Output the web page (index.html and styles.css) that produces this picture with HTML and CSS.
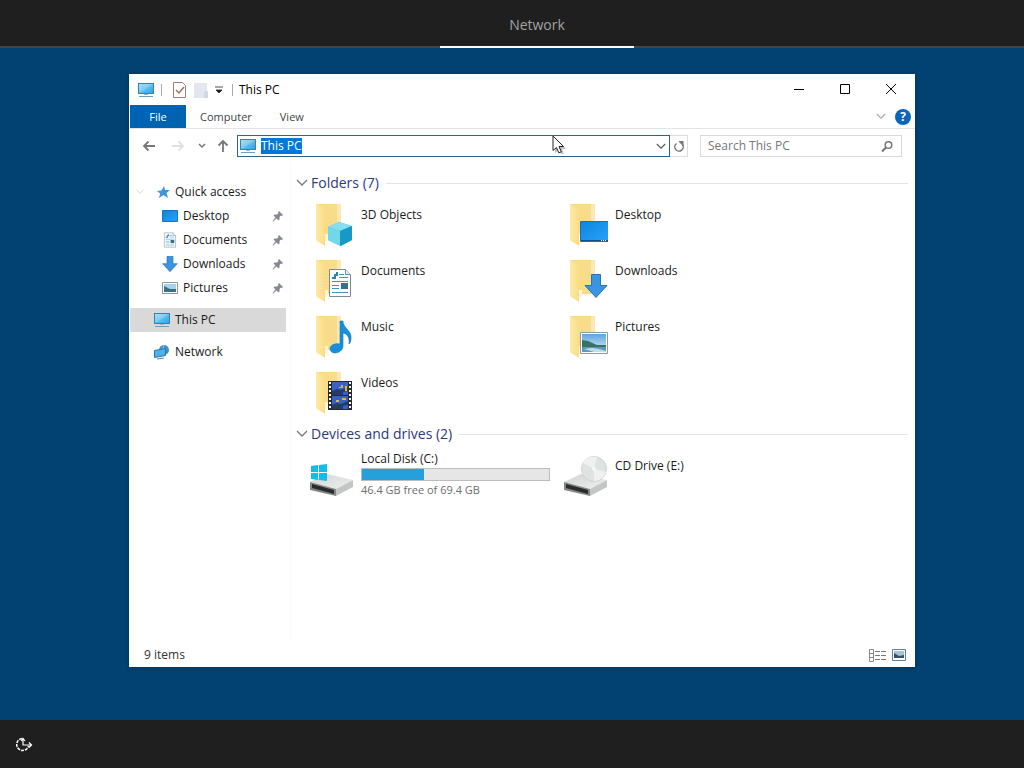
FILE: index.html
```html
<!DOCTYPE html>
<html lang="en">
<head>
    <meta charset="UTF-8">
    <meta name="viewport" content="width=device-width, initial-scale=1.0">
    <title>This PC</title>
    <link rel="stylesheet" href="styles.css">
</head>
<body>
    <!-- shared icons -->
    <svg class="defs" aria-hidden="true">
        <defs>
            <linearGradient id="screen" x1="0" y1="0" x2="1" y2="1">
                <stop offset="0" stop-color="#8fdcfa"/>
                <stop offset="1" stop-color="#2aa0e4"/>
            </linearGradient>
            <linearGradient id="blue" x1="0" y1="0" x2="1" y2="1">
                <stop offset="0" stop-color="#1184dd"/>
                <stop offset="1" stop-color="#25a4f8"/>
            </linearGradient>
            <linearGradient id="yellow" x1="0" y1="0" x2="1" y2="0">
                <stop offset="0" stop-color="#fdeaa9"/>
                <stop offset="1" stop-color="#fbdd84"/>
            </linearGradient>
            <linearGradient id="sky" x1="0" y1="0" x2="0" y2="1">
                <stop offset="0" stop-color="#5ba6e0"/>
                <stop offset="1" stop-color="#e2f1f7"/>
            </linearGradient>
            <linearGradient id="metal" x1="0" y1="0" x2="1" y2="1">
                <stop offset="0" stop-color="#d2d4d4"/>
                <stop offset="1" stop-color="#eef0f0"/>
            </linearGradient>
        </defs>
        <symbol id="pc" viewBox="0 0 18 16">
            <rect x="1.5" y="1.5" width="15" height="10" fill="url(#screen)" stroke="#3b80ac"/>
            <path d="M2 2h14L4 10H2z" fill="#fff" opacity=".2"/>
            <path d="M7 12h4v1H7z" fill="#9db5c2"/>
            <path d="M2 14.5h14" stroke="#6ba0bf"/>
        </symbol>
        <symbol id="folder" viewBox="0 0 44 48">
            <path d="M6 5h24v34H15z" fill="#f8dc8a"/>
            <path d="M27 5h4v34h-4z" fill="#fbe9b4"/>
            <path d="M6 5l8 4q1 1 1 3v35l-8-5q-1-1-1-2z" fill="url(#yellow)"/>
            <path d="M15 35h3v6l-3 2z" fill="#fff6d8"/>
        </symbol>
        <symbol id="page" viewBox="0 0 24 30">
            <path d="M1.500 1.500h16l5 5v22h-21z" fill="#fff" stroke="#7c8a93"/>
            <path d="M17.500 1.500v5h5" fill="#e9eef1" stroke="#7c8a93"/>
            <path d="M4 10h3V7h2V4" fill="none" stroke="#2585bd" stroke-width="2"/>
            <path d="M11 6.500h5M11 9.500h9M4 13.500h16M4 17.500h7M4 20.500h7M4 24.500h16" stroke="#3f95c6"/>
            <rect x="13" y="15" width="7" height="6" fill="#397084"/>
        </symbol>
        <symbol id="down" viewBox="0 0 24 24">
            <path d="M7.500 .5h9v11h6.500L12 23.500 1 11.500h6.500z" fill="#3995e2" stroke="#2475bb"/>
        </symbol>
        <symbol id="photo" viewBox="0 0 28 22">
            <path d="M.5 .5h27v21H.5z" fill="#fff" stroke="#91999e"/>
            <path d="M2 2h24v18H2z" fill="url(#sky)"/>
            <path d="M2 8l6 1 9 4h9v3H2z" fill="#397265"/>
            <path d="M2 15h24v5H2z" fill="#5c9abd"/>
            <path d="M4 17l8-1 7 1 7 2v1H14z" fill="#c5dce6"/>
        </symbol>
        <symbol id="pin" viewBox="0 0 12 12">
            <path d="M7 1l4 4-1 1-1-.5L7.500 7v2.500L6.500 10.500 4.500 8.500 1 11.500.5 11 3.500 7.500 1.500 5.500 2.500 4.500H5L6.500 3 6 2z" fill="#858a90"/>
        </symbol>
        <symbol id="chevron" viewBox="0 0 12 8">
            <path d="M1 1l5 5 5-5" fill="none" stroke="currentColor" stroke-width="1.300"/>
        </symbol>
        <symbol id="drive" viewBox="0 0 44 26">
            <path d="M0 12L17 4l26 6-17 9z" fill="url(#metal)"/>
            <path d="M0 12l26 7v7L0 20z" fill="#858787"/>
            <path d="M2 14l22 6v4L2 18z" fill="#292b2c"/>
            <path d="M26 19l17-9v7l-17 9z" fill="#c3c6c6"/>
        </symbol>
    </svg>

    <header class="topbar">
        <h1 class="topbar-tab">Network</h1>
    </header>

    <main class="desktop">
        <section class="window">
            <div class="titlebar">
                <svg class="icon-pc" viewBox="0 0 18 16"><use href="#pc"/></svg>
                <span class="divider"></span>
                <button class="quick" aria-label="Properties">
                    <svg width="14" height="16" viewBox="0 0 14 16"><path d="M1.500 .5h9l3 3v12h-12z" fill="#fff" stroke="#988078"/><path d="M4 8l3 3 5-6" fill="none" stroke="#a8705c" stroke-width="1.500"/></svg>
                </button>
                <button class="quick" aria-label="New folder">
                    <svg width="14" height="16" viewBox="0 0 14 16"><path d="M0 1h13v15H0z" fill="#e1e6ef"/><path d="M10 9h4v7h-4z" fill="#d3d9e4"/></svg>
                </button>
                <button class="quick quick-more" aria-label="Customize">
                    <svg width="8" height="8" viewBox="0 0 8 8"><path d="M0 1h8M1 4h6L4 7z" stroke="#222" fill="#222" stroke-width=".8"/></svg>
                </button>
                <span class="divider"></span>
                <h2 class="title">This PC</h2>
                <div class="controls">
                    <button aria-label="Minimize"><svg width="12" height="12" viewBox="0 0 12 12"><path d="M1 5.500h10" stroke="#000"/></svg></button>
                    <button aria-label="Maximize"><svg width="12" height="12" viewBox="0 0 12 12"><path d="M1.500 .5h9v9h-9z" stroke="#000" fill="none"/></svg></button>
                    <button aria-label="Close"><svg width="12" height="12" viewBox="0 0 12 12"><path d="M1 0l10 10M11 0L1 10" stroke="#000"/></svg></button>
                </div>
            </div>

            <div class="ribbon">
                <button class="tab tab-file">File</button>
                <button class="tab">Computer</button>
                <button class="tab">View</button>
                <button class="expand" aria-label="Expand the ribbon"><svg width="10" height="7"><use href="#chevron"/></svg></button>
                <button class="help" aria-label="Help">?</button>
            </div>

            <div class="addressbar">
                <button class="nav-btn" aria-label="Back"><svg width="14" height="12" viewBox="0 0 14 12"><path d="M13 6H2M6.500 1.500L2 6l4.500 4.500" fill="none" stroke="#777" stroke-width="1.800"/></svg></button>
                <button class="nav-btn" aria-label="Forward"><svg width="14" height="12" viewBox="0 0 14 12"><path d="M1 6h11M7.500 1.500L12 6l-4.500 4.500" fill="none" stroke="#e0e0e0" stroke-width="1.800"/></svg></button>
                <button class="nav-btn nav-recent" aria-label="Recent locations"><svg width="8" height="6" viewBox="0 0 8 6"><path d="M1 1l3 3 3-3" fill="none" stroke="#777" stroke-width="1.500"/></svg></button>
                <button class="nav-btn nav-up" aria-label="Up"><svg width="12" height="14" viewBox="0 0 12 14"><path d="M6 13V2M1.500 6.500L6 2l4.500 4.500" fill="none" stroke="#777" stroke-width="1.800"/></svg></button>
                <div class="address">
                    <svg class="icon-pc" viewBox="0 0 18 16"><use href="#pc"/></svg>
                    <input id="address" type="text" value="This PC" aria-label="Address">
                    <button aria-label="Previous locations"><svg width="10" height="7"><use href="#chevron"/></svg></button>
                    <svg class="pointer" viewBox="0 0 14 20"><path d="M3 3v15l4-3 2 4h3l-2-5h4z" fill="#000" opacity=".25"/><path d="M1 1v14.500l3.500-3 2.300 5.300 2.500-1-2.300-5.300h4.500z" fill="#fff" stroke="#222"/></svg>
                </div>
                <button class="refresh" aria-label="Refresh"><svg width="12" height="12" viewBox="0 0 12 12"><path d="M9.500 4.500a4.200 4.200 0 1 1-6-1" fill="none" stroke="#777" stroke-width="1.500"/><path d="M5 1h5.500v5.500z" fill="#777"/><path d="M3 1.500h3" stroke="#fff"/></svg></button>
                <div class="search">
                    <input type="text" placeholder="Search This PC" aria-label="Search This PC">
                    <svg width="14" height="14" viewBox="0 0 14 14"><circle cx="8.500" cy="6" r="3.300" fill="none" stroke="#777" stroke-width="1.500"/><path d="M6 8.500l-4 4" stroke="#777" stroke-width="2"/></svg>
                </div>
            </div>

            <div class="content">
                <nav class="sidebar">
                    <a href="#quick"><svg class="twisty" width="8" height="6"><use href="#chevron"/></svg><svg width="16" height="16" viewBox="0 0 16 16"><path d="M9 2l1 4h5l-3.500 3 1.500 5-4.500-3L4 14l1.200-4.500L2 7l4.500-.5z" fill="#3b96dd"/></svg>Quick access</a>
                    <a class="child" href="#desktop"><svg width="18" height="16" viewBox="0 0 18 16"><path d="M1.500 2.500h15v11h-15z" fill="url(#blue)" stroke="#1672c3"/></svg>Desktop<svg class="pin" width="12" height="12"><use href="#pin"/></svg></a>
                    <a class="child" href="#documents"><svg width="18" height="16"><use href="#page"/></svg>Documents<svg class="pin" width="12" height="12"><use href="#pin"/></svg></a>
                    <a class="child" href="#downloads"><svg width="18" height="16"><use href="#down"/></svg>Downloads<svg class="pin" width="12" height="12"><use href="#pin"/></svg></a>
                    <a class="child" href="#pictures"><svg width="18" height="12" viewBox="0 0 18 12"><path d="M1.500 .5h15v11h-15z" fill="#fff" stroke="#8b969d"/><path d="M3 2h12v8H3z" fill="#a7d2e8"/><path d="M3 4l6 3h6v3H3z" fill="#397083"/></svg>Pictures<svg class="pin" width="12" height="12"><use href="#pin"/></svg></a>
                    <a class="root active" href="#pc-root"><svg width="18" height="16"><use href="#pc"/></svg>This PC</a>
                    <a class="root" href="#network"><svg width="18" height="16" viewBox="0 0 18 16"><circle cx="11" cy="6" r="5" fill="#3f90ce"/><path d="M11 1c-2 4 0 7 2 9" stroke="#a5d5f2" fill="none"/><path d="M1.500 6.500l11-2v7l-11 2z" fill="#4fb0ea" stroke="#2878ae"/><path d="M4 15l7-1" stroke="#528baf"/></svg>Network</a>
                </nav>

                <div class="files">
                    <button class="group"><svg width="12" height="8"><use href="#chevron"/></svg>Folders (7)</button>
                    <div class="grid">
                        <a class="item" href="#3d">
                            <svg viewBox="0 0 44 48"><use href="#folder"/><path d="M18 28l11-5 13 4v14l-11 6-13-6z" fill="#32b6d8"/><path d="M18 28l11-5 13 4-12 5z" fill="#84dff0"/><path d="M18 28l12 4v15l-12-6z" fill="#71d8ea"/><path d="M30 32l12-5v14l-12 6z" fill="#169ac5"/></svg>
                            <span>3D Objects</span>
                        </a>
                        <a class="item" href="#desktop">
                            <svg viewBox="0 0 44 48"><use href="#folder"/><path d="M16.500 22.500h28v20h-28z" fill="url(#blue)" stroke="#1571bd"/><path d="M17 41.500h27" stroke="#164e82"/><path d="M37 41.500h6" stroke="#fff" stroke-dasharray="1 1"/></svg>
                            <span>Desktop</span>
                        </a>
                        <a class="item" href="#documents">
                            <svg viewBox="0 0 44 48"><use href="#folder"/><use href="#page" x="18" y="13" width="24" height="30"/></svg>
                            <span>Documents</span>
                        </a>
                        <a class="item" href="#downloads">
                            <svg viewBox="0 0 44 48"><use href="#folder"/><use href="#down" x="20" y="19" width="24" height="24"/></svg>
                            <span>Downloads</span>
                        </a>
                        <a class="item" href="#music">
                            <svg viewBox="0 0 44 48"><use href="#folder"/><path d="M30 10h3c0 7 8 9 8 16 0 3 0 5-2 7 1-7-2-10-6-11v13c0 4-4 7-8 7-3 0-5-2-5-4 0-4 5-6 10-5z" fill="#168fdc" stroke="#1175bd" stroke-width=".6"/></svg>
                            <span>Music</span>
                        </a>
                        <a class="item" href="#pictures">
                            <svg viewBox="0 0 44 48"><use href="#folder"/><use href="#photo" x="16" y="21" width="28" height="22"/></svg>
                            <span>Pictures</span>
                        </a>
                        <a class="item" href="#videos">
                            <svg viewBox="0 0 44 48"><use href="#folder"/><path d="M18 14h24v29H18z" fill="#27292f"/><path d="M22 15h16v13H22zM22 29h16v13H22z" fill="#3563c0"/><path d="M22 24l5-2 4 1 7-3v4l-5 1v3H22zM22 38l5-2 4 1 7-3v4l-5 1v3H22z" fill="#263d63"/><path d="M29 20h2v-2h2v3h-4zM35 19h2v5h-2zM26 33h3v2h-3zM32 31h4v2h-4z" fill="#dfb52d"/><path d="M20 15v28M40 15v28" stroke="#fff" stroke-width="2" stroke-dasharray="2 2"/></svg>
                            <span>Videos</span>
                        </a>
                    </div>

                    <button class="group"><svg width="12" height="8"><use href="#chevron"/></svg>Devices and drives (2)</button>
                    <div class="grid drives">
                        <a class="item" href="#c">
                            <svg viewBox="0 0 44 48"><use href="#drive" x="0" y="19" width="44" height="26"/><path d="M1 15l7-1v7H1zM9 14l8-1v8H9zM1 22h7v7l-7-1zM9 22h8v8l-8-1z" fill="#12bdec"/></svg>
                            <span class="disk">
                                <span>Local Disk (C:)</span>
                                <span class="bar"><span class="used" style="width: 33%"></span></span>
                                <span class="free">46.4 GB free of 69.4 GB</span>
                            </span>
                        </a>
                        <a class="item cd" href="#e">
                            <svg viewBox="0 0 44 48"><use href="#drive" x="0" y="19" width="44" height="26"/><circle cx="30" cy="18" r="12.500" fill="#dfe3e2" stroke="#cdd2d1"/><path d="M30 18L19 12c3-6 9-7 14-6zM30 18l12 3c-2 6-7 9-12 9z" fill="#eef1f0"/><circle cx="30" cy="18" r="2" fill="#f8f9f9"/></svg>
                            <span>CD Drive (E:)</span>
                        </a>
                    </div>
                </div>
            </div>

            <footer class="statusbar">
                <span>9 items</span>
                <button aria-label="Details view"><svg width="17" height="13" viewBox="0 0 17 13"><path d="M.5 .5h4v12h-4zM.5 4.500h4M.5 8.500h4" fill="none" stroke="#888"/><path d="M6 2.500h11M6 6.500h11M6 10.500h11" stroke="#777" stroke-dasharray="5 1"/></svg></button>
                <button aria-label="Large icons view"><svg width="14" height="12" viewBox="0 0 14 12"><path d="M.5 .5h13v11H.5z" fill="#fff" stroke="#647d91"/><path d="M2 2h10v7H2z" fill="#a8c1d4"/><path d="M2 4l5 3 5-1v3H2z" fill="#38516a"/></svg></button>
            </footer>
        </section>
    </main>

    <footer class="bottombar">
        <button aria-label="Ease of access">
            <svg width="18" height="16" viewBox="0 0 18 16"><path d="M7 2.500a6 6 0 1 0 6.500 7.500" fill="none" stroke="#fff" stroke-width="1.500" stroke-dasharray="3 1"/><path d="M8 3v6h8M14 6.500L16.500 9 14 11.500M6 5l2-2.500L10 5" fill="none" stroke="#fff" stroke-width="1.200"/></svg>
        </button>
    </footer>

    <script>
        const address = document.getElementById("address");
        address.focus();
        address.select();
    </script>
</body>
</html>
```
FILE: styles.css
```css
*{
    margin: 0;
    padding: 0;
    box-sizing: border-box;
}
body{
    min-height: 100vh;
    display: flex;
    flex-direction: column;
    background-color: #024273;
    font-family: "Open Sans", "Noto Sans", sans-serif;
    font-size: 12px;
    line-height: 16px;
    color: #1a1a1a;
}
button{
    border: none;
    background: none;
    font: inherit;
    color: inherit;
}
input{
    border: none;
    outline: 0;
    background: none;
    font: inherit;
    min-width: 0;
}
a{
    color: inherit;
    text-decoration: none;
}
svg{
    display: block;
    flex-shrink: 0;
}
.defs{
    position: absolute;
    width: 0;
    height: 0;
}
.topbar{
    height: 48px;
    padding-left: 50px;
    background-color: #1f1f1f;
    box-shadow: inset 0 -2px #454545;
    display: flex;
    justify-content: center;
}
.topbar-tab{
    width: 194px;
    border-bottom: 2px solid white;
    text-align: center;
    font-size: 14px;
    font-weight: normal;
    line-height: 50px;
    color: #a3a3a3;
}
.desktop{
    flex: 1;
    display: flex;
    padding: 26px 109px 53px 129px;
}
.window{
    flex: 1;
    min-width: 0;
    display: flex;
    flex-direction: column;
    background-color: white;
    border-left: 1px solid white;
    box-shadow: 0 1px 4px rgba(0, 0, 0, 0.3);
}

/* title bar */
.titlebar{
    height: 31px;
    padding-left: 7px;
    display: flex;
    align-items: center;
}
.icon-pc{
    width: 18px;
    height: 16px;
}
.divider{
    width: 1px;
    height: 12px;
    margin: 0 6px;
    background-color: #aaa;
}
.quick{
    width: 22px;
    display: flex;
    justify-content: center;
}
.quick-more{
    width: 14px;
}
.title{
    font-size: 12px;
    font-weight: normal;
    color: black;
}
.controls{
    margin-left: auto;
    margin-right: 1px;
    display: flex;
}
.controls button{
    width: 46px;
    height: 30px;
    display: flex;
    align-items: center;
    justify-content: center;
}

/* ribbon */
.ribbon{
    height: 24px;
    padding-right: 4px;
    border-bottom: 1px solid #e3e3e3;
    display: flex;
    align-items: center;
    color: #444;
}
.tab{
    height: 23px;
    padding: 0 14px;
    font-size: 11px;
}
.tab-file{
    width: 56px;
    background-color: #0063b1;
    color: white;
}
.expand{
    margin-left: auto;
    margin-right: 9px;
    color: #aaa;
}
.help{
    width: 16px;
    height: 16px;
    border-radius: 50%;
    background-color: #0a65b8;
    color: white;
    font-weight: bold;
    line-height: 16px;
}

/* address row */
.addressbar{
    height: 34px;
    padding: 0 13px 0 7px;
    display: flex;
    align-items: center;
}
.nav-btn{
    width: 29px;
    height: 22px;
    padding-right: 5px;
    display: flex;
    align-items: center;
    justify-content: center;
}
.nav-recent{
    width: 14px;
    padding: 0;
}
.nav-up{
    width: 28px;
    padding: 0;
}
.address{
    position: relative;
    flex: 1;
    height: 22px;
    padding: 0 3px 0 1px;
    border: 1px solid #2a6487;
    display: flex;
    align-items: center;
}
.address button{
    color: #555;
}
.address input{
    flex: 1;
    height: 16px;
    margin-left: 4px;
}
.address input::selection{
    background-color: #0078d7;
    color: white;
}
.pointer{
    position: absolute;
    right: 103px;
    top: -1px;
    width: 14px;
    height: 20px;
}
.refresh{
    width: 18px;
    height: 22px;
    border: 1px solid #ddd;
    border-left: none;
    display: flex;
    align-items: center;
    justify-content: center;
}
.search{
    width: 202px;
    height: 22px;
    margin-left: 12px;
    padding: 0 7px;
    border: 1px solid #d9d9d9;
    display: flex;
    align-items: center;
}
.search input{
    flex: 1;
}
.search input::placeholder{
    color: #767676;
}

/* content */
.content{
    flex: 1;
    display: flex;
}
.sidebar{
    width: 156px;
    padding-top: 17px;
}
.sidebar a{
    height: 24px;
    padding-left: 6px;
    display: flex;
    align-items: center;
    gap: 4px;
}
.twisty{
    margin-right: 7px;
    color: #ccc;
}
.sidebar .child{
    padding-left: 31px;
}
.pin{
    margin-left: auto;
    margin-right: 2px;
}
.sidebar .root{
    margin-top: 8px;
    padding-left: 23px;
}
.sidebar .active{
    background-color: #d9d9d9;
}
.files{
    flex: 1;
    margin-left: 4px;
    padding: 9px 7px 0 5px;
    border-left: 1px solid #fafafa;
}
.group{
    width: 100%;
    height: 22px;
    display: flex;
    align-items: center;
    gap: 3px;
    font-size: 14px;
    color: #2b3a7c;
}
.group svg{
    color: #777;
}
.group::after{
    content: "";
    flex: 1;
    height: 1px;
    margin-left: 4px;
    background-color: #e4e4e4;
}
.grid{
    padding: 5px 0 0 14px;
    display: grid;
    grid-template-columns: repeat(auto-fill, 254px);
    grid-auto-rows: 56px;
}
.item{
    display: flex;
    gap: 7px;
}
.item > svg{
    width: 44px;
    height: 48px;
}
.item > span{
    padding-top: 8px;
}
.drives{
    padding-top: 6px;
}
.drives .item > span{
    padding-top: 0;
}
.drives .cd > span{
    padding-top: 7px;
}
.disk{
    width: 189px;
    display: flex;
    flex-direction: column;
}
.bar{
    height: 13px;
    margin: 1px 0;
    border: 1px solid #bcbcbc;
    background-color: #e6e6e6;
    display: flex;
}
.used{
    background-color: #26a0da;
}
.free{
    font-size: 11px;
    color: #6d6d6d;
}

/* status bar */
.statusbar{
    height: 24px;
    padding: 0 9px 0 14px;
    display: flex;
    align-items: center;
    gap: 6px;
    color: #333;
}
.statusbar span{
    flex: 1;
}

.bottombar{
    height: 48px;
    padding-left: 15px;
    background-color: #1f1f1f;
    display: flex;
    align-items: center;
}
```
